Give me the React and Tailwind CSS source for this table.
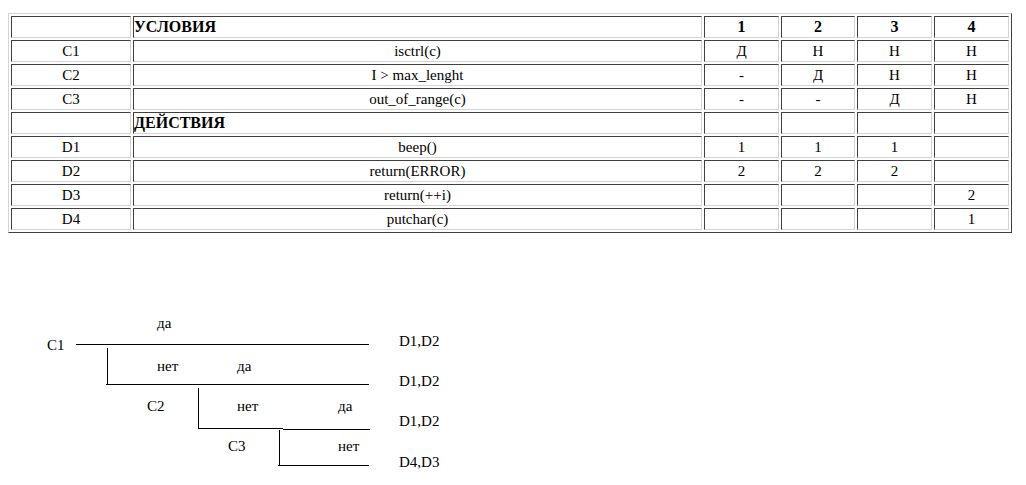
import React from 'react';

const rows = [
  { id: '', label: 'УСЛОВИЯ', cols: ['1', '2', '3', '4'], head: true },
  { id: 'C1', label: 'isctrl(c)', cols: ['Д', 'Н', 'Н', 'Н'] },
  { id: 'C2', label: 'I > max_lenght', cols: ['-', 'Д', 'Н', 'Н'] },
  { id: 'C3', label: 'out_of_range(c)', cols: ['-', '-', 'Д', 'Н'] },
  { id: '', label: 'ДЕЙСТВИЯ', cols: ['', '', '', ''], head: true },
  { id: 'D1', label: 'beep()', cols: ['1', '1', '1', ''] },
  { id: 'D2', label: 'return(ERROR)', cols: ['2', '2', '2', ''] },
  { id: 'D3', label: 'return(++i)', cols: ['', '', '', '2'] },
  { id: 'D4', label: 'putchar(c)', cols: ['', '', '', '1'] },
];

const colWidths = ['w-[75px]', 'w-[74px]', 'w-[75px]', 'w-[75px]'];

const cell = 'h-[22px] p-0 border border-t-[#404040] border-l-[#404040] border-b-[#d4d4d4] border-r-[#d4d4d4] align-middle';

// lines of the tree diagram, page x / y relative to the diagram box
const lines = [
  { x: 76, y: 111, w: 293, h: 1 },
  { x: 107, y: 115, w: 1, h: 36 },
  { x: 106, y: 151, w: 263, h: 1 },
  { x: 198, y: 155, w: 1, h: 40 },
  { x: 198, y: 195, w: 85, h: 1 },
  { x: 283, y: 196, w: 87, h: 1 },
  { x: 279, y: 197, w: 1, h: 35 },
  { x: 278, y: 232, w: 91, h: 1 },
];

const labels = [
  { t: 'да', x: 157, y: 83 },
  { t: 'C1', x: 47, y: 105 },
  { t: 'нет', x: 157, y: 126 },
  { t: 'да', x: 237, y: 126 },
  { t: 'C2', x: 147, y: 166 },
  { t: 'нет', x: 237, y: 166 },
  { t: 'да', x: 338, y: 166 },
  { t: 'C3', x: 228, y: 206 },
  { t: 'нет', x: 338, y: 206 },
  { t: 'D1,D2', x: 399, y: 101 },
  { t: 'D1,D2', x: 399, y: 141 },
  { t: 'D1,D2', x: 399, y: 181 },
  { t: 'D4,D3', x: 399, y: 222 },
];

function App() {
  return (
    <div className="min-h-screen bg-white text-black [font-family:'Liberation_Serif','Times_New_Roman',serif]">
      <div className="pl-2 pt-[13px]">
        <table className="table-fixed w-[1004px] border-separate border-spacing-[2px] border border-t-[#d4d4d4] border-l-[#d4d4d4] border-b-[#404040] border-r-[#404040] text-[15px] leading-[18px]">
          <tbody>
            {rows.map((row, i) => (
              <tr key={i}>
                <td className={`${cell} w-[120px] text-center`}>{row.id}</td>
                <td className={`${cell} w-[569px] ${row.head ? 'text-left font-bold text-[16px]' : 'text-center'}`}>
                  {row.label}
                </td>
                {row.cols.map((c, j) => (
                  <td key={j} className={`${cell} ${colWidths[j]} text-center ${row.head ? 'font-bold text-[16px]' : ''}`}>
                    {c}
                  </td>
                ))}
              </tr>
            ))}
          </tbody>
        </table>
      </div>

      {/* decision tree */}
      <div className="relative h-[252px] text-[15px] leading-none">
        <svg className="absolute inset-0 w-full h-full" shapeRendering="crispEdges">
          {lines.map((l, i) => (
            <rect key={i} x={l.x} y={l.y} width={l.w} height={l.h} fill="#000" />
          ))}
        </svg>
        {labels.map((l, i) => (
          <span key={i} className="absolute whitespace-nowrap" style={{ left: l.x, top: l.y }}>
            {l.t}
          </span>
        ))}
      </div>
    </div>
  );
}

export default App;
